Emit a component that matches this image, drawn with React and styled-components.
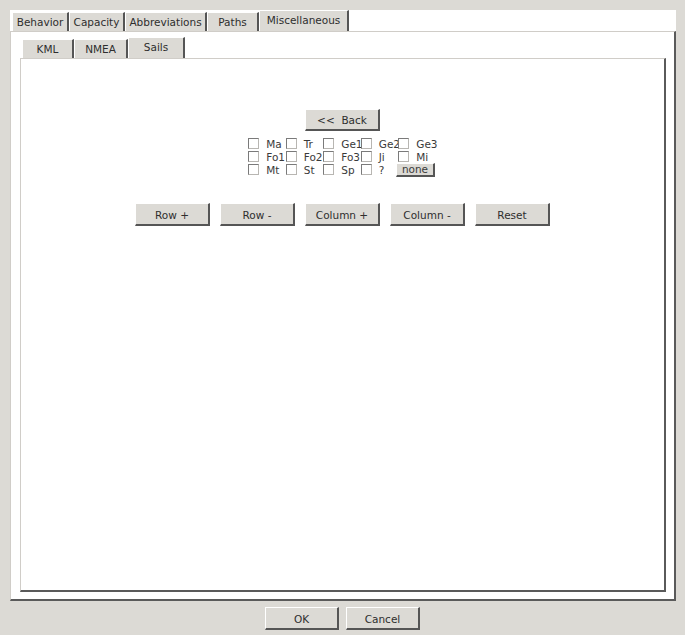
import React from "react";
import styled, { createGlobalStyle } from "styled-components";

const GlobalStyle = createGlobalStyle`
	html, body {
		margin: 0;
		padding: 0;
		background: #dcdad5;
	}
	body {
		font-family: "DejaVu Sans", "Liberation Sans", sans-serif;
		font-size: 10.5px;
		color: #2e2e2e;
	}
`;

const outerTabs = [
	{ label: "Behavior", width: 57 },
	{ label: "Capacity", width: 56 },
	{ label: "Abbreviations", width: 82 },
	{ label: "Paths", width: 52 },
	{ label: "Miscellaneous", width: 90, active: true },
];

const innerTabs = [
	{ label: "KML", width: 52 },
	{ label: "NMEA", width: 54 },
	{ label: "Sails", width: 57, active: true },
];

const sails = [
	["Ma", "Tr", "Ge1", "Ge2", "Ge3"],
	["Fo1", "Fo2", "Fo3", "Ji", "Mi"],
	["Mt", "St", "Sp", "?"],
];

export default function App() {
	return (
		<Window>
			<GlobalStyle />
			<TabFrame>
				<TabBar>
					{outerTabs.map((t) => (
						<Tab key={t.label} $width={t.width} $active={t.active}>
							{t.label}
						</Tab>
					))}
				</TabBar>
				<OuterPanel>
					<TabBar>
						{innerTabs.map((t) => (
							<Tab key={t.label} $width={t.width} $active={t.active}>
								{t.label}
							</Tab>
						))}
					</TabBar>
					<InnerPanel>
						<Button $width={75} $height={22}>
							&lt;&lt;&nbsp; Back
						</Button>
						<SailGrid>
							{sails.map((row, r) =>
								row.map((name) => (
									<Cell key={r + name}>
										<Box />
										<span>{name}</span>
									</Cell>
								))
							)}
							<Cell>
								<SmallButton>none</SmallButton>
							</Cell>
						</SailGrid>
						<ButtonRow>
							<Button $width={75} $height={23}>Row +</Button>
							<Button $width={75} $height={23}>Row -</Button>
							<Button $width={75} $height={23}>Column +</Button>
							<Button $width={75} $height={23}>Column -</Button>
							<Button $width={75} $height={23}>Reset</Button>
						</ButtonRow>
					</InnerPanel>
				</OuterPanel>
			</TabFrame>
			<Footer>
				<Button $width={74} $height={23}>OK</Button>
				<Button $width={74} $height={23}>Cancel</Button>
			</Footer>
		</Window>
	);
}

const Window = styled.div`
	width: 685px;
	height: 635px;
	box-sizing: border-box;
	padding: 10px 9px 0 10px;
	display: flex;
	flex-direction: column;
	overflow: hidden;
`;

const TabFrame = styled.div`
	width: 666px;
	height: 591px;
	background: #ffffff;
	display: flex;
	flex-direction: column;
`;

const TabBar = styled.div`
	height: 21px;
	display: flex;
	align-items: flex-end;
	padding-left: 2px;
	flex-shrink: 0;
`;

const Tab = styled.div`
	width: ${(p) => p.$width}px;
	height: ${(p) => (p.$active ? 21 : 19)}px;
	box-sizing: border-box;
	background: #dcdad5;
	border-top: 1px solid #ffffff;
	border-left: 1px solid #ffffff;
	border-right: 2px solid #555555;
	display: flex;
	align-items: center;
	justify-content: center;
	white-space: nowrap;
	padding-bottom: ${(p) => (p.$active ? 2 : 1)}px;
`;

const OuterPanel = styled.div`
	flex: 1;
	box-sizing: border-box;
	border-top: 1px solid #d0cdc8;
	border-left: 1px solid #d0cdc8;
	border-right: 2px solid #5a5a5a;
	border-bottom: 2px solid #5a5a5a;
	padding: 5px 8px 7px 9px;
	display: flex;
	flex-direction: column;
`;

const InnerPanel = styled.div`
	flex: 1;
	box-sizing: border-box;
	background: #ffffff;
	border-top: 1px solid #d0cdc8;
	border-left: 1px solid #d0cdc8;
	border-right: 2px solid #5a5a5a;
	border-bottom: 2px solid #5a5a5a;
	padding-top: 50px;
	display: flex;
	flex-direction: column;
	align-items: center;
`;

const Button = styled.div`
	width: ${(p) => p.$width}px;
	height: ${(p) => p.$height}px;
	box-sizing: border-box;
	background: #dcdad5;
	border-top: 1px solid #ffffff;
	border-left: 1px solid #ffffff;
	border-right: 2px solid #555555;
	border-bottom: 2px solid #555555;
	display: flex;
	align-items: center;
	justify-content: center;
	white-space: nowrap;
	padding-top: 1px;
`;

const SmallButton = styled.div`
	width: 41px;
	height: 14px;
	margin-left: -1px;
	box-sizing: border-box;
	background: #dcdad5;
	border-top: 1px solid #ffffff;
	border-left: 1px solid #ffffff;
	border-right: 2px solid #555555;
	border-bottom: 2px solid #555555;
	display: flex;
	align-items: center;
	justify-content: center;
	line-height: 1;
`;

const SailGrid = styled.div`
	margin-top: 6px;
	margin-right: 3px;
	display: grid;
	grid-template-columns: repeat(5, 37.5px);
	grid-auto-rows: 13px;
`;

const Cell = styled.div`
	display: flex;
	align-items: center;
	white-space: nowrap;
	color: #3a3a3a;
	span {
		margin-left: 7px;
	}
`;

const Box = styled.div`
	width: 11px;
	height: 11px;
	box-sizing: border-box;
	background: #ffffff;
	border-top: 1px solid #7a7a7a;
	border-left: 1px solid #7a7a7a;
	border-right: 1px solid #b8b6b2;
	border-bottom: 1px solid #b8b6b2;
	margin-left: 1px;
	flex-shrink: 0;
`;

const ButtonRow = styled.div`
	margin-top: 27px;
	display: flex;
	gap: 10px;
`;

const Footer = styled.div`
	flex: 1;
	display: flex;
	justify-content: center;
	align-items: flex-start;
	gap: 7px;
	padding-top: 6px;
	padding-right: 1px;
`;
